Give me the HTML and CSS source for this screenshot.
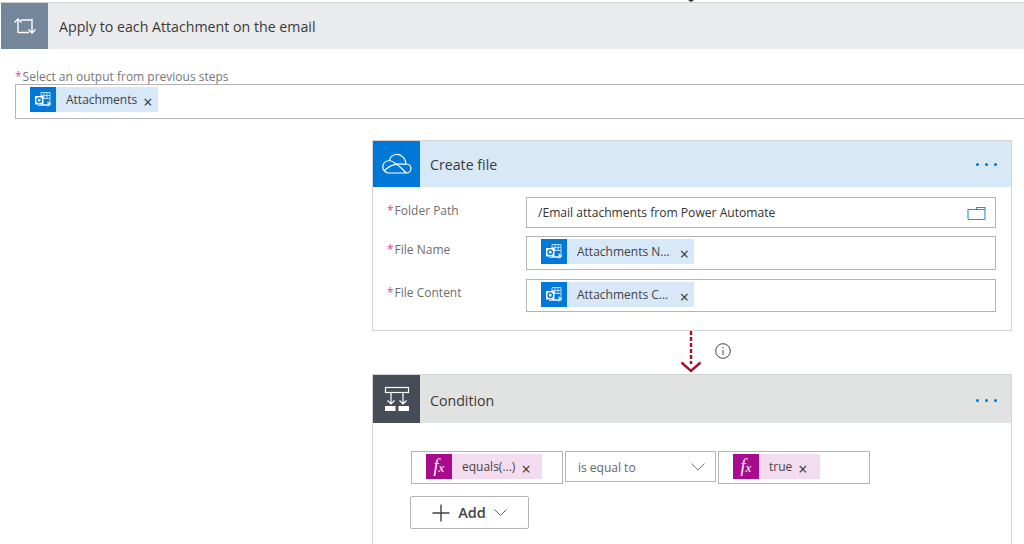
FILE: index.html
```html
<!DOCTYPE html>
<html lang="en">
<head>
    <meta charset="UTF-8">
    <meta name="viewport" content="width=device-width, initial-scale=1.0">
    <title>Apply to each Attachment on the email</title>
    <link rel="stylesheet" href="styles.css">
</head>
<body>
    <svg class="sprite" xmlns="http://www.w3.org/2000/svg">
        <symbol id="outlook" viewBox="0 0 26 26">
            <path d="M11 5.500h9v12h-9zM11 8.500h9M11 11.500h9M14 5.500v6M17 5.500v6" fill="none" stroke="#b9d8f3" stroke-width="1"/>
            <path d="M8 18.500h12" stroke="#b9d8f3" stroke-width="1"/>
            <path d="M17.500 14l4 3-4 3z" fill="#cfe4f7"/>
            <rect x="5" y="9" width="8.500" height="8.500" fill="#fff"/>
            <circle cx="9.200" cy="13.200" r="2.200" fill="none" stroke="#0078d7" stroke-width="1.500"/>
        </symbol>
    </svg>

    <div class="page">
        <div class="notch"></div>

        <section class="loop">
            <header class="step-head step-head-loop">
                <div class="step-icon step-icon-loop">
                    <svg width="24" height="18" viewBox="0 0 24 18" fill="none" stroke="#fff" stroke-width="1.400">
                        <path d="M5 16V2.500M1.500 5.500L5 2l3.500 3.500M8 3h11v0M19 2v13.500M15.500 12.500L19 16l3.500-3.500M16 15.500H5"/>
                    </svg>
                </div>
                <h2 class="step-title step-title-loop">Apply to each Attachment on the email</h2>
            </header>
            <div class="loop-body">
                <div class="output-label"><span class="star">*</span>Select an output from previous steps</div>
                <div class="output-input">
                    <span class="chip chip-blue">
                        <span class="chip-icon chip-icon-blue"><svg width="26" height="26"><use href="#outlook"/></svg></span>
                        <span class="chip-text">Attachments</span>
                        <span class="chip-x">×</span>
                    </span>
                </div>
            </div>
        </section>

        <section class="branch">
            <div class="card">
                <header class="step-head step-head-blue">
                    <div class="step-icon step-icon-blue">
                        <svg width="30" height="22" viewBox="0 0 30 22" fill="none" stroke="#fff" stroke-width="1.200">
                            <path d="M7 20h17.500c5.500 0 6.500-8.500-0.500-9C23.500 4.500 18.500 1 14 1.500 10.500 2 8 4.500 7.500 7.500 2.500 8 0.800 11.500 0.800 14c0 3.500 3 6 6.200 6z"/>
                            <path d="M7.500 7.500c6 1 11 7 17 12.500M1.800 18c5-5 13-8.500 22.200-6.500"/>
                        </svg>
                    </div>
                    <h2 class="step-title">Create file</h2>
                    <div class="more"><i></i><i></i><i></i></div>
                </header>
                <div class="form-body">
                    <div class="form-row form-row-path">
                        <label class="form-label"><span class="star">*</span>Folder Path</label>
                        <div class="form-input form-input-text">
                            <span>/Email attachments from Power Automate</span>
                            <svg width="19" height="14" viewBox="0 0 19 14" fill="none" stroke="#2f8be0" stroke-width="1.100">
                                <path d="M1 3.500h17v9a1 1 0 0 1-1 1H2a1 1 0 0 1-1-1zM9.500 3.500V1.500h8.500v2"/>
                            </svg>
                        </div>
                    </div>
                    <div class="form-row form-row-name">
                        <label class="form-label"><span class="star">*</span>File Name</label>
                        <div class="form-input">
                            <span class="chip chip-blue chip-wide">
                                <span class="chip-icon chip-icon-blue"><svg width="26" height="26"><use href="#outlook"/></svg></span>
                                <span class="chip-text">Attachments N...</span>
                                <span class="chip-x chip-x-end">×</span>
                            </span>
                        </div>
                    </div>
                    <div class="form-row">
                        <label class="form-label"><span class="star">*</span>File Content</label>
                        <div class="form-input form-input-last">
                            <span class="chip chip-blue chip-wide">
                                <span class="chip-icon chip-icon-blue"><svg width="26" height="26"><use href="#outlook"/></svg></span>
                                <span class="chip-text">Attachments C...</span>
                                <span class="chip-x chip-x-end">×</span>
                            </span>
                        </div>
                    </div>
                </div>
            </div>

            <div class="connector">
                <svg class="connector-arrow" width="24" height="42" viewBox="0 0 24 42" fill="none" stroke="#a80f2b" stroke-width="2.400">
                    <path d="M12 0v33" stroke-dasharray="4 2"/>
                    <path d="M2.500 31.500L12 40l9.500-8.500" stroke-width="2.400"/>
                </svg>
                <svg class="connector-info" width="16" height="16" viewBox="0 0 16 16" fill="none" stroke="#444" stroke-width="1">
                    <circle cx="8" cy="8" r="7.300"/>
                    <path d="M8 7v5M8 4v1.500"/>
                </svg>
            </div>

            <div class="card card-condition">
                <header class="step-head step-head-grey">
                    <div class="step-icon step-icon-grey">
                        <svg width="26" height="26" viewBox="0 0 26 26" fill="none" stroke="#fff" stroke-width="1.200">
                            <rect x="1.500" y="1.500" width="23" height="5"/>
                            <path d="M7 7v11M3.500 14.500L7 18l3.500-3.500M19 7v11M15.500 14.500L19 18l3.500-3.500"/>
                            <path d="M1 20h10.500v5H1zM14.500 20H25v5H14.500z" fill="#fff" stroke="none"/>
                        </svg>
                    </div>
                    <h2 class="step-title step-title-condition">Condition</h2>
                    <div class="more more-condition"><i></i><i></i><i></i></div>
                </header>
                <div class="condition-body">
                    <div class="condition-row">
                        <div class="cond-field cond-left">
                            <span class="chip chip-pink chip-equals">
                                <span class="chip-icon chip-icon-pink">f<small>x</small></span>
                                <span class="chip-text">equals(...)</span>
                                <span class="chip-x">×</span>
                            </span>
                        </div>
                        <div class="cond-select">
                            <span>is equal to</span>
                            <svg width="14" height="8" viewBox="0 0 14 8" fill="none" stroke="#777" stroke-width="1">
                                <path d="M0.500 0.500L7 7l6.500-6.500"/>
                            </svg>
                        </div>
                        <div class="cond-field cond-right">
                            <span class="chip chip-pink chip-true">
                                <span class="chip-icon chip-icon-pink">f<small>x</small></span>
                                <span class="chip-text">true</span>
                                <span class="chip-x">×</span>
                            </span>
                        </div>
                    </div>
                    <button class="add-btn" type="button">
                        <svg width="18" height="18" viewBox="0 0 18 18" fill="none" stroke="#444" stroke-width="1.400">
                            <path d="M9 0.500v17M0.500 9h17"/>
                        </svg>
                        <span>Add</span>
                        <svg width="13" height="7" viewBox="0 0 13 7" fill="none" stroke="#666" stroke-width="1">
                            <path d="M0.500 0.500L6.500 6.500l6-6"/>
                        </svg>
                    </button>
                </div>
            </div>
        </section>
    </div>
</body>
</html>
```

FILE: styles.css
```css
html, body {
    margin: 0;
    padding: 0;
    height: 544px;
    overflow: hidden;
    background: #fff;
}
body {
    font-family: "Open Sans", "Noto Sans", sans-serif;
    color: #333;
}
.sprite {
    display: none;
}
.page {
    width: 1024px;
}
.notch {
    width: 0;
    height: 2px;
    margin-left: 688px;
    border-left: 3px solid transparent;
    border-right: 3px solid transparent;
    border-top: 2px solid #333;
    box-sizing: border-box;
}

/* step headers */
.step-head {
    display: flex;
    align-items: center;
}
.step-icon {
    width: 47px;
    align-self: stretch;
    flex: none;
    display: flex;
    align-items: center;
    justify-content: center;
}
.step-title {
    margin: 0 0 0 10px;
    font-size: 14.2px;
    font-weight: 400;
    color: #3b3a39;
}
.step-title-condition {
    padding-top: 2px;
}
.more {
    margin-left: auto;
    margin-right: 14px;
    display: flex;
    gap: 6px;
}
.more-condition {
    padding-top: 2px;
}
.more i {
    width: 3px;
    height: 3px;
    border-radius: 50%;
    background: #0078d7;
}

/* apply to each */
.loop {
    border-top: 1px solid #d0d0d0;
    padding-left: 1px;
}
.step-head-loop {
    height: 46px;
    background: #e9ebed;
    margin-left: 0;
}
.step-icon-loop {
    background: #74879a;
}
.step-title-loop {
    margin-left: 11px;
}
.loop-body {
    padding: 21px 0 0 14px;
}
.output-label {
    font-size: 12px;
    line-height: 14px;
    color: #777;
}
.star {
    color: #e0478f;
    margin-right: 1px;
}
.output-input {
    height: 31px;
    border: 1px solid #b4b4b4;
    border-right: none;
    padding: 2px 0 0 14px;
}

/* chips */
.chip {
    display: inline-flex;
    align-items: center;
    height: 25px;
    font-size: 12px;
}
.chip-blue {
    background: #d7e8f8;
    width: 128px;
}
.chip-wide {
    width: 153px;
}
.chip-pink {
    background: #f4dcf0;
}
.chip-equals {
    width: 116px;
}
.chip-true {
    width: 87px;
}
.chip-icon {
    width: 26px;
    height: 25px;
    flex: none;
    overflow: hidden;
    display: flex;
    align-items: center;
    justify-content: center;
}
.chip-icon-blue {
    background: #0078d7;
}
.chip-icon-pink {
    background: #a80b8c;
    color: #fff;
    font-family: "Liberation Serif", serif;
    font-style: italic;
    font-size: 18px;
}
.chip-icon-pink small {
    font-size: 13px;
    margin-top: 3px;
}
.chip-text {
    margin-left: 10px;
    color: #444;
    white-space: nowrap;
}
.chip-x {
    margin-left: 6px;
    font-size: 16px;
    line-height: 16px;
    color: #333;
    position: relative;
    top: 2px;
}
.chip-x-end {
    margin-left: auto;
    margin-right: 5px;
}

/* cards */
.branch {
    margin: 21px 0 0 372px;
    width: 640px;
}
.card {
    border: 1px solid #d4d4d4;
    box-sizing: border-box;
}
.step-head-blue {
    height: 46px;
    background: #d7e8f7;
}
.step-icon-blue {
    background: #0078d7;
}
.form-body {
    padding: 10px 15px 18px 14px;
}
.form-row {
    display: flex;
}
.form-row-path {
    margin-bottom: 8px;
}
.form-row-name {
    margin-bottom: 9px;
}
.form-label {
    width: 139px;
    flex: none;
    font-size: 12px;
    line-height: 28px;
    color: #6e6e6e;
}
.form-input {
    flex: 1;
    height: 34px;
    box-sizing: border-box;
    border: 1px solid #b4b4b4;
    padding: 2px 14px;
}
.form-input-last {
    height: 33px;
}
.form-input-text {
    height: 31px;
    padding: 0 9px 0 11px;
    display: flex;
    align-items: center;
    justify-content: space-between;
    font-size: 12.1px;
    color: #333;
}

/* connector */
.connector {
    height: 43px;
    position: relative;
}
.connector-arrow {
    position: absolute;
    left: 307px;
    top: 0;
}
.connector-info {
    position: absolute;
    left: 343px;
    top: 12px;
}

/* condition */
.step-head-grey {
    height: 48px;
    background: #e1e2e2;
}
.step-icon-grey {
    background: #464d59;
}
.card-condition {
    height: 170px;
    border-bottom: none;
}
.condition-body {
    padding: 28px 0 0 37px;
}
.condition-row {
    display: flex;
    gap: 2px;
    margin-left: 1px;
}
.cond-field {
    width: 152px;
    height: 33px;
    box-sizing: border-box;
    border: 1px solid #b4b4b4;
    padding: 2px 0 0 14px;
}
.cond-select {
    width: 151px;
    height: 31px;
    box-sizing: border-box;
    border: 1px solid #b4b4b4;
    padding: 1px 10px 0 12px;
    display: flex;
    align-items: center;
    justify-content: space-between;
    font-size: 12px;
    color: #666;
}
.add-btn {
    margin-top: 12px;
    width: 119px;
    height: 33px;
    border: 1px solid #b4b4b4;
    border-radius: 2px;
    background: #fff;
    padding: 0;
    display: flex;
    align-items: center;
    justify-content: center;
    gap: 8px;
    font-family: inherit;
    font-size: 14.5px;
    font-weight: 600;
    color: #444;
}
```
